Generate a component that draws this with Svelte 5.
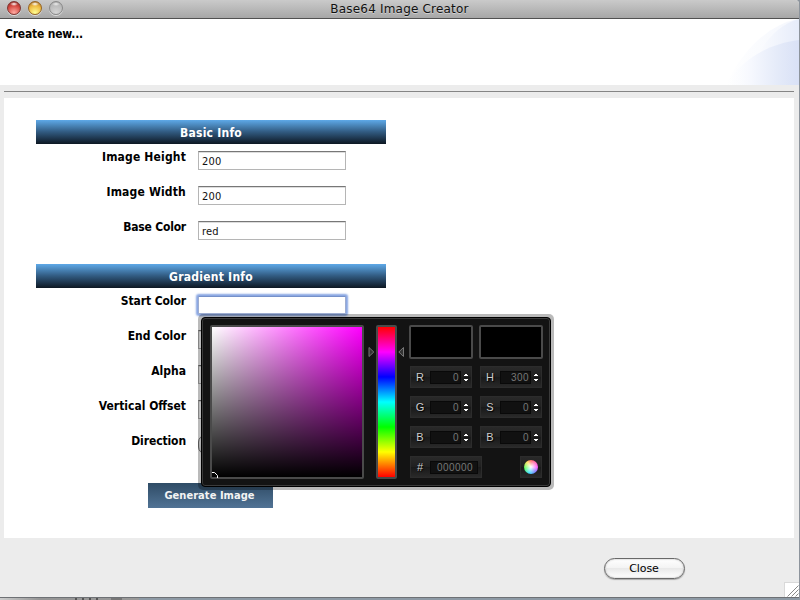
<script>
  const basic = [
    { label: 'Image Height', value: '200', spacing: 0.17 },
    { label: 'Image Width', value: '200', spacing: 0.18 },
    { label: 'Base Color', value: 'red', spacing: -0.2 }
  ];
  const gradient = [
    { label: 'Start Color', kind: 'focus', spacing: -0.1 },
    { label: 'End Color', kind: 'text', spacing: 0 },
    { label: 'Alpha', kind: 'text', spacing: 0 },
    { label: 'Vertical Offset', kind: 'text', spacing: 0 },
    { label: 'Direction', kind: 'select', spacing: -0.1 }
  ];
  const channels = [
    ['R', '0'], ['H', '300'],
    ['G', '0'], ['S', '0'],
    ['B', '0'], ['B', '0']
  ];
</script>

<div class="desktop">
  <div class="window">
    <div class="titlebar">
      <div class="lights"><i class="red"></i><i class="yellow"></i><i class="gray"></i></div>
      <span>Base64 Image Creator</span>
    </div>
    <header>
      <span class="heading">Create new...</span>
      <svg class="swoosh" width="75" height="66" viewBox="0 0 75 66">
        <defs>
          <linearGradient id="wash"><stop offset="0" stop-color="#fff" /><stop offset="1" stop-color="#e6ecfa" /></linearGradient>
          <linearGradient id="wash2"><stop offset="0" stop-color="#fff" stop-opacity="0.2" /><stop offset="0.35" stop-color="#f6f8fe" /><stop offset="0.7" stop-color="#e5ebf9" /><stop offset="1" stop-color="#d9e1f6" /></linearGradient>
        </defs>
        <path d="M2 66C16 35 43 5 75 0V66Z" fill="url(#wash)" opacity="0.45" />
        <path d="M25 66C30 33 49 7 75 0V66Z" fill="url(#wash)" />
        <path d="M1 66C17 42 42 25 75 21V66Z" fill="url(#wash2)" />
      </svg>
    </header>
    <div class="rule"></div>
    <main>
      <section>
        <h2>Basic Info</h2>
        {#each basic as row}
          <div class="row"><label style="letter-spacing: {row.spacing}px">{row.label}</label><div class="field">{row.value}</div></div>
        {/each}
      </section>
      <section class="second">
        <h2>Gradient Info</h2>
        {#each gradient as row}
          <div class="row"><label style="letter-spacing: {row.spacing}px">{row.label}</label><div class="field {row.kind}"></div></div>
        {/each}
      </section>
      <button class="generate">Generate Image</button>

      <div class="picker">
        <div class="inner">
          <div class="palette"><svg width="6" height="6" viewBox="0 0 6 6"><path d="M0 .5H2.5L5.5 3.5V6" fill="none" stroke="#fff" /></svg></div>
          <div class="slider">
            <svg width="7" height="10" viewBox="0 0 7 10"><path d="M1 .5L5.8 5L1 9.5Z" fill="#333" stroke="#777" /></svg>
            <div class="hue"></div>
            <svg width="7" height="10" viewBox="0 0 7 10"><path d="M5.5 .5L.8 5L5.5 9.5Z" fill="#333" stroke="#777" /></svg>
          </div>
          <div class="controls">
            <div class="swatch"></div><div class="swatch"></div>
            {#each channels as [name, value]}
              <div class="channel">
                <b>{name}</b><span class="num">{value}</span>
                <svg width="4" height="7" viewBox="0 0 4 7"><path d="M1 0H3V1H4V2H0V1H1ZM0 5H4V6H3V7H1V6H0Z" fill="#fff" /></svg>
              </div>
            {/each}
            <div class="bottom">
              <div class="channel hex"><b>#</b><span class="num">000000</span></div>
              <div class="channel submit"><div class="wheel"></div></div>
            </div>
          </div>
        </div>
      </div>
    </main>
    <footer><button class="close">Close</button></footer>
    <div class="grip">
      <svg width="14" height="14" viewBox="0 0 14 14"><path d="M2.5 13.5L13.5 2.5M6.5 13.5L13.5 6.5M10.5 13.5L13.5 10.5" stroke="#8a8a8a" /></svg>
    </div>
  </div>
  <div class="behind"><i></i><i></i><i></i><i></i><i class="wide"></i></div>
</div>

<style>
  .desktop { width: 800px; height: 600px; overflow: hidden; background: #8d949c; position: relative; }
  .window { width: 799px; height: 598px; box-sizing: border-box; border-bottom: 1px solid #6e7175; background: #ececec; display: flex; flex-direction: column; position: relative; border-radius: 0 4px 0 0; overflow: hidden; }
  .titlebar { flex: none; height: 18px; border-bottom: 1px solid #515151; background: linear-gradient(#cacaca, #a7a7a7); position: relative; text-align: center; font: 12px/17px "DejaVu Sans", sans-serif; letter-spacing: .19px; color: #111; text-shadow: 0 1px 0 #d0d0d0; }
  .titlebar span { position: relative; top: 1px; }
  .lights { position: absolute; left: 7px; top: 1px; display: flex; gap: 7px; }
  .lights i { width: 14px; height: 14px; box-sizing: border-box; border-radius: 50%; border: 1px solid; box-shadow: 0 1px 0 #ddd; }
  .red { border-color: #7e3531 !important; background: radial-gradient(ellipse 4px 2px at 6px 2px, #fff, transparent), radial-gradient(circle at 50% 90%, #ffaca4, #d4473f 60%, #7b1f1b); }
  .yellow { border-color: #966524 !important; background: radial-gradient(ellipse 4px 2px at 6px 2px, #fff, transparent), radial-gradient(circle at 50% 90%, #ffff93, #edb83f 60%, #92591f); }
  .gray { border-color: #8a8a8a !important; background: radial-gradient(ellipse 4px 2px at 6px 2px, #eee, transparent), radial-gradient(circle at 50% 90%, #d5d5d5, #b8b8b8 70%, #999); }
  header { flex: none; height: 66px; background: #fff; display: flex; justify-content: space-between; }
  .heading { padding: 8px 0 0 5px; font: bold 12px/15px "DejaVu Sans Condensed", "DejaVu Sans", sans-serif; letter-spacing: -.2px; color: #000; }
  .swoosh { display: block; }
  .rule { flex: none; height: 1px; margin: 6px 5px 6px 4px; background: #858585; }
  main { flex: none; height: 440px; margin: 0 5px 0 4px; background: #fff; padding: 22px 32px 0; box-sizing: border-box; position: relative; }
  section { width: 350px; }
  h2 { margin: 0 0 2px; height: 24px; font: bold 12px/26px "DejaVu Sans Condensed", "DejaVu Sans", sans-serif; letter-spacing: .25px; color: #fff; text-align: center; background: linear-gradient(#5ea9e8, #315a80 50%, #0d1722); }
  .row { height: 35px; display: flex; align-items: flex-start; }
  label { width: 150px; text-align: right; margin-right: 12px; font: bold 12px/23px "DejaVu Sans Condensed", "DejaVu Sans", sans-serif; color: #000; }
  .field { width: 148px; height: 19px; margin-top: 5px; box-sizing: border-box; border: 1px solid #b5b5b5; border-top: 1px solid #777; box-shadow: inset 0 1px #ddd; padding-left: 3px; font: 11px/19px "DejaVu Sans Condensed", "DejaVu Sans", sans-serif; letter-spacing: .2px; color: #111; background: #fff; }
  .second { margin-top: 13px; }
  .focus { border-color: #7590c9 #9dacd0 #9dacd0; box-shadow: 0 0 2px 2px #87a5e2; border-radius: 1px; height: 18px; margin-top: 6px; }
  .select { border: 1px solid #777; border-radius: 7px; background: linear-gradient(#fff, #ddd); }
  .generate { display: block; margin: 18px 0 0 112px; width: 125px; height: 25px; padding: 0 2px 0 0; border: 0; color: #f3f3f3; background: linear-gradient(#2f4c66, #517395); font: bold 11px/25px "DejaVu Sans Condensed", "DejaVu Sans", sans-serif; letter-spacing: .05px; }
  .picker { position: absolute; left: 194px; top: 216px; width: 356px; height: 176px; box-sizing: border-box; padding: 3px; background: rgba(0, 0, 0, .27); border-radius: 5px; }
  .inner { width: 350px; height: 170px; box-sizing: border-box; background: #131313; border: 1px solid #000; border-radius: 4px; box-shadow: inset 0 0 0 1px #3b3b3b; display: flex; padding: 7px 7px 7px 8px; }
  .palette { width: 154px; height: 154px; box-sizing: border-box; border: 2px solid #4a4a4a; border-radius: 2px; background: linear-gradient(transparent, #000) padding-box, linear-gradient(90deg, #fff, #f0f) padding-box; display: flex; align-items: flex-end; }
  .palette svg { display: block; margin-bottom: -1px; }
  .slider { display: flex; width: 36px; margin-left: 4px; margin-right: 1px; gap: 1px; }
  .slider svg { flex: none; margin-top: 22px; }
  .hue { width: 21px; height: 154px; flex: none; box-sizing: border-box; border: 2px solid #4a4a4a; border-radius: 2px; background: linear-gradient(#f00, #f0f 16.7%, #00f 33.3%, #0ff 50%, #0f0 66.7%, #ff0 83.3%, #f00) padding-box; margin: 0; }
  .controls { margin-left: 4px; width: 134px; display: grid; grid-template-columns: 64px 64px; gap: 7px 6px; grid-template-rows: 34px 23px 23px 23px 23px; align-content: start; }
  .swatch { box-sizing: border-box; border: 2px solid #4a4a4a; border-radius: 2px; background: #000; }
  .channel { width: 62px; height: 22px; margin-left: 1px; box-sizing: border-box; border: 1px solid #2c2c2c; background: linear-gradient(#292929, #202020 50%, #191919 50%, #292929); display: flex; align-items: center; color: #ccc; }
  .channel b { width: 18px; padding-right: 1px; text-align: center; font: 11px/20px "Liberation Sans", Arial, sans-serif; text-shadow: 1px 1px 1px #000; }
  .num { width: 31px; height: 13px; box-sizing: border-box; padding-right: 1px; text-align: right; background: #111; border: 1px solid #090909; color: #777; font: 10px/11px "Liberation Sans", Arial, sans-serif; letter-spacing: .45px; }
  .channel svg { margin-left: 3px; }
  .bottom { grid-column: 1 / 3; display: flex; justify-content: space-between; }
  .hex { width: 72px; }
  .hex .num { width: 48px; padding-right: 4px; }
  .submit { width: 22px; margin-right: 1px; justify-content: center; }
  .wheel { width: 14px; height: 14px; border-radius: 50%; background: radial-gradient(#fff, rgba(255,255,255,.5) 35%, transparent 70%), conic-gradient(#f66, #f5f 25%, #77f 38%, #3df 55%, #5f5 72%, #fd5 90%, #f66); }
  footer { flex: 1; display: flex; justify-content: flex-end; padding: 20px 114px 0 0; }
  .close { width: 81px; height: 21px; padding: 0 1px 0 0; border: 1px solid #686868; border-radius: 11px; background: linear-gradient(#fff, #f4f4f4 45%, #e9e9e9 50%, #fff); box-shadow: 0 1px 1px #aaa, inset 0 0 2px #aaa; font: 11px/17px "DejaVu Sans", sans-serif; letter-spacing: -.1px; color: #000; }
  .grip { position: absolute; right: 0; bottom: 0; width: 14px; height: 14px; border: 1px solid #d9d9d9; border-right: 0; border-bottom: 0; background: #fff; }
  .grip svg { display: block; }
  .behind { height: 2px; display: flex; gap: 2px; padding-left: 75px; background: linear-gradient(90deg, #ccc, #959595 40px, #999 139px, #8e9aa5 139px); }
  .behind i { width: 2px; margin-right: 3px; height: 2px; background: #555; }
  .behind .wide { width: 11px; margin-left: 8px; background: #777; }
</style>
